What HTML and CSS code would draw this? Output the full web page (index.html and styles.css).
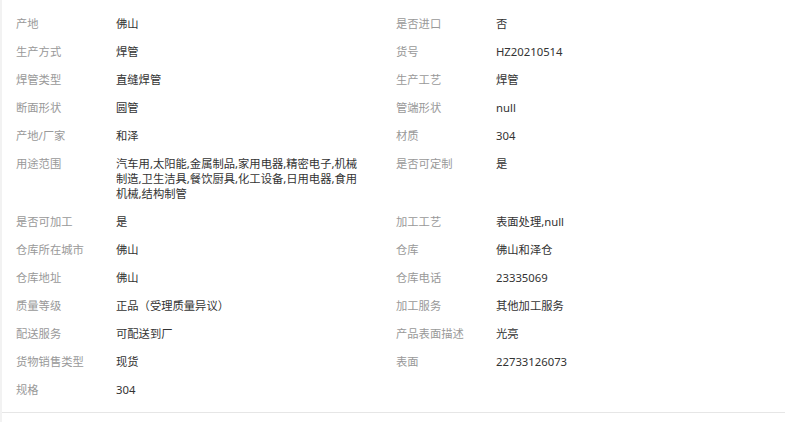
FILE: index.html
```html
<!DOCTYPE html>
<html lang="zh-CN">
<head>
  <meta charset="UTF-8">
  <title>商品属性</title>
  <link rel="stylesheet" href="styles.css">
</head>
<body>
  <div class="page">
    <div class="attrs">
      <div class="attr"><span class="attr-name">产地</span><span class="attr-value">佛山</span></div>
      <div class="attr"><span class="attr-name">是否进口</span><span class="attr-value">否</span></div>
      <div class="attr"><span class="attr-name">生产方式</span><span class="attr-value">焊管</span></div>
      <div class="attr"><span class="attr-name">货号</span><span class="attr-value">HZ20210514</span></div>
      <div class="attr"><span class="attr-name">焊管类型</span><span class="attr-value">直缝焊管</span></div>
      <div class="attr"><span class="attr-name">生产工艺</span><span class="attr-value">焊管</span></div>
      <div class="attr"><span class="attr-name">断面形状</span><span class="attr-value">圆管</span></div>
      <div class="attr"><span class="attr-name">管端形状</span><span class="attr-value">null</span></div>
      <div class="attr"><span class="attr-name">产地/厂家</span><span class="attr-value">和泽</span></div>
      <div class="attr"><span class="attr-name">材质</span><span class="attr-value">304</span></div>
      <div class="attr"><span class="attr-name">用途范围</span><span class="attr-value">汽车用,太阳能,金属制品,家用电器,精密电子,机械制造,卫生洁具,餐饮厨具,化工设备,日用电器,食用机械,结构制管</span></div>
      <div class="attr"><span class="attr-name">是否可定制</span><span class="attr-value">是</span></div>
      <div class="attr"><span class="attr-name">是否可加工</span><span class="attr-value">是</span></div>
      <div class="attr"><span class="attr-name">加工工艺</span><span class="attr-value">表面处理,null</span></div>
      <div class="attr"><span class="attr-name">仓库所在城市</span><span class="attr-value">佛山</span></div>
      <div class="attr"><span class="attr-name">仓库</span><span class="attr-value">佛山和泽仓</span></div>
      <div class="attr"><span class="attr-name">仓库地址</span><span class="attr-value">佛山</span></div>
      <div class="attr"><span class="attr-name">仓库电话</span><span class="attr-value">23335069</span></div>
      <div class="attr"><span class="attr-name">质量等级</span><span class="attr-value">正品（受理质量异议）</span></div>
      <div class="attr"><span class="attr-name">加工服务</span><span class="attr-value">其他加工服务</span></div>
      <div class="attr"><span class="attr-name">配送服务</span><span class="attr-value">可配送到厂</span></div>
      <div class="attr"><span class="attr-name">产品表面描述</span><span class="attr-value">光亮</span></div>
      <div class="attr"><span class="attr-name">货物销售类型</span><span class="attr-value">现货</span></div>
      <div class="attr"><span class="attr-name">表面</span><span class="attr-value">22733126073</span></div>
      <div class="attr"><span class="attr-name">规格</span><span class="attr-value">304</span></div>
    </div>
  </div>
</body>
</html>
```

FILE: styles.css
```css
body {
  margin: 0;
  background: #fff;
  font-family: "Noto Sans", "Noto Sans CJK SC", sans-serif;
  font-size: 11.3px;
  color: #333;
}
.page {
  border-left: 2px solid #f2f2f2;
  min-height: 422px;
  box-sizing: border-box;
}
.attrs {
  display: grid;
  grid-template-columns: 380px 380px;
  padding: 10px 0 8px 14px;
  border-bottom: 1px solid #e6e6e6;
}
.attr {
  display: flex;
  padding: 6px 0 7px;
  line-height: 15px;
}
.attr-name {
  width: 100px;
  flex-shrink: 0;
  color: #999;
}
.attr-value {
  width: 250px;
  color: #333;
}
```
